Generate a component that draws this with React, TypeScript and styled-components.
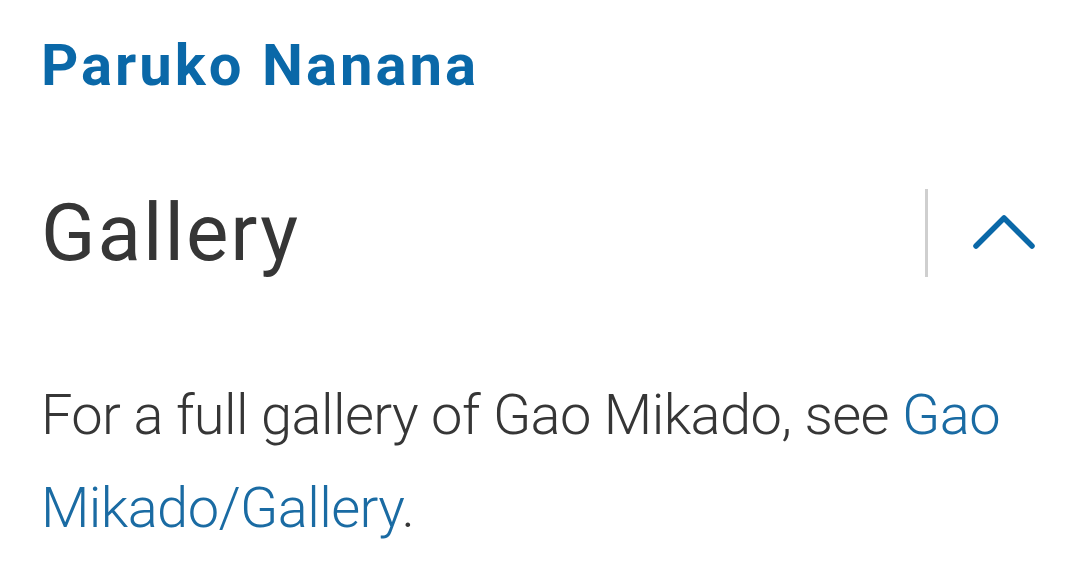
import React from "react";
import styled, { createGlobalStyle } from "styled-components";

const Global = createGlobalStyle`
  html, body { margin: 0; padding: 0; background: #fff; }
  body { font-family: Roboto, "Liberation Sans", sans-serif; }
`;

const Page = styled.div`
  width: 1080px;
  height: 572px;
  box-sizing: border-box;
  padding: 0 44px 0 41px;
  overflow: hidden;
`;

const Title = styled.h1`
  margin: 0;
  padding-top: 28px;
  font-size: 58px;
  line-height: 74px;
  font-weight: 700;
  letter-spacing: 3px;
  color: #0a68a8;
`;

const SectionHeader = styled.div`
  display: flex;
  align-items: center;
  justify-content: space-between;
  margin-top: 86px;
  height: 90px;
`;

const Heading = styled.h2`
  margin: 0;
  font-size: 80px;
  font-weight: 400;
  letter-spacing: 2px;
  color: #363636;
  line-height: 90px;
`;

const Toggle = styled.div`
  display: flex;
  align-items: center;
  height: 88px;
`;

const Divider = styled.div`
  width: 3px;
  height: 88px;
  background: #cfcfcf;
  margin-right: 44px;
`;

const Body = styled.p`
  margin: 91px 0 0;
  font-size: 56px;
  line-height: 93px;
  font-weight: 300;
  letter-spacing: -0.6px;
  color: #363636;
`;

const Link = styled.a`
  color: #1a6ba3;
  text-decoration: none;
`;

const Chevron = () => (
  <svg width="64" height="40" viewBox="0 0 64 40">
    <polyline
      points="4,33 32,5 60,33"
      fill="none"
      stroke="#0a68a8"
      strokeWidth="5.5"
      strokeLinecap="round"
      strokeLinejoin="round"
    />
  </svg>
);

export default function App() {
  return (
    <>
      <Global />
      <Page>
        <Title>Paruko Nanana</Title>
        <SectionHeader>
          <Heading>Gallery</Heading>
          <Toggle>
            <Divider />
            <Chevron />
          </Toggle>
        </SectionHeader>
        <Body>
          For a full gallery of Gao Mikado, see <Link href="#">Gao Mikado/Gallery</Link>.
        </Body>
      </Page>
    </>
  );
}
